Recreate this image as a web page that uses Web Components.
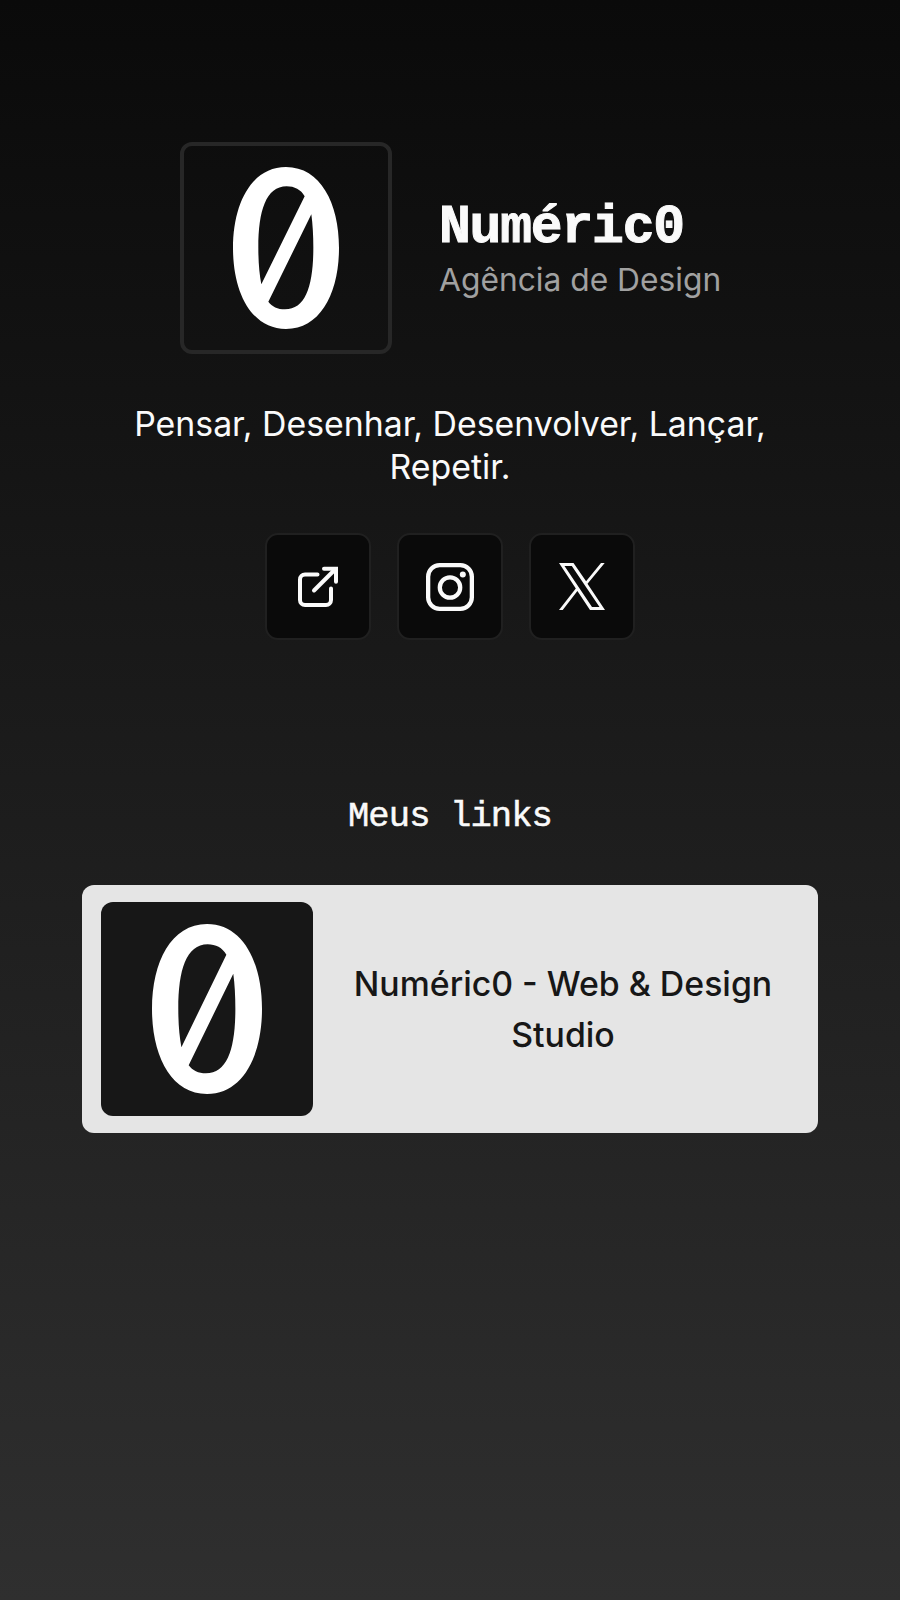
<!DOCTYPE html>
<html lang="pt">
<head>
<meta charset="utf-8">
<title>Numéric0</title>
<style>
    body {
        margin: 0;
        font-family: Inter, "Liberation Sans", sans-serif;
        color: #fafafa;
    }
</style>
</head>
<body>

<n0-page>
    <n0-profile>
        <n0-logo slot="logo"></n0-logo>
        <span slot="name">Numéric0</span>
        <span slot="role">Agência de Design</span>
    </n0-profile>
    <n0-bio>Pensar, Desenhar, Desenvolver, Lançar, Repetir.</n0-bio>
    <n0-socials>
        <n0-social icon="external"></n0-social>
        <n0-social icon="instagram"></n0-social>
        <n0-social icon="x"></n0-social>
    </n0-socials>
    <n0-heading>Meus links</n0-heading>
    <n0-link>
        <n0-logo slot="logo"></n0-logo>
        Numéric0 - Web &amp; Design Studio
    </n0-link>
</n0-page>

<script>
//icones des boutons
const ICONS = {
    external: `
        <svg width="40" height="41" viewBox="0 0 40 41" fill="none" stroke="#fafafa" stroke-width="4" stroke-linecap="round" stroke-linejoin="round">
            <path d="M19.500 8.500H7a5 5 0 0 0-5 5V34a5 5 0 0 0 5 5h21a5 5 0 0 0 5-5V22.500"/>
            <path d="M16 24.500L36 4.500"/>
            <path d="M26 2.700h12v13" stroke-linejoin="miter"/>
        </svg>`,
    instagram: `
        <svg width="48" height="48" viewBox="0 0 48 48" fill="none" stroke="#fafafa" stroke-width="4.300">
            <rect x="2.150" y="2.150" width="43.700" height="43.700" rx="11.500"/>
            <circle cx="24" cy="24.500" r="10.200"/>
            <circle cx="36.800" cy="11.500" r="3" fill="#fafafa" stroke="none"/>
        </svg>`,
    x: `
        <svg width="46" height="47" viewBox="0 0 46 47" fill="#fafafa">
            <path fill-rule="evenodd" d="M0 0h14.500l12.600 18.300L42 0h3.700L28.500 20.700 46 47H31L18.400 28 3.700 47H0L16.800 25.500zM5.500 3l27.500 41h7.500L12.800 3z"/>
        </svg>`
};

class N0Page extends HTMLElement {
    constructor() {
        super();
        this.attachShadow({ mode: 'open' }).innerHTML = `
        <style>
            :host {
                display: flex;
                flex-direction: column;
                align-items: center;
                box-sizing: border-box;
                height: 1600px;
                padding-top: 142px;
                background: linear-gradient(#0a0a0a, #2f2f2f);
            }
        </style>
        <slot></slot>`;
    }
}

//zero barre': anneau ovale et barre oblique
class N0Logo extends HTMLElement {
    constructor() {
        super();
        this.attachShadow({ mode: 'open' }).innerHTML = `
        <style>
            :host { display: block; }
            svg { display: block; width: 100%; height: 100%; }
        </style>
        <svg viewBox="0 0 318 486" preserveAspectRatio="none">
            <path fill="#fff" fill-rule="evenodd" d="M159 0C262 0 318 108 318 243S262 486 159 486 0 378 0 243 56 0 159 0Z
                M215 88C204 68 184 58 161 58C99 58 76 132 76 242C76 285 79 321 85 352Z
                M106 404C117 419 134 427 156 427C219 427 241 353 241 242C241 205 239 171 235 142Z"/>
        </svg>`;
    }
}

class N0Profile extends HTMLElement {
    constructor() {
        super();
        this.attachShadow({ mode: 'open' }).innerHTML = `
        <style>
            :host {
                display: flex;
                align-items: center;
                gap: 47px;
            }
            .avatar {
                display: flex;
                align-items: center;
                justify-content: center;
                box-sizing: border-box;
                width: 212px;
                height: 212px;
                border: 4px solid #272727;
                border-radius: 12px;
            }
            ::slotted(n0-logo) { width: 106px; height: 162px; }
            .text {
                display: flex;
                flex-direction: column;
                width: 281px;
                padding-top: 3px;
            }
            h1 {
                margin: 0;
                font: bold 53px/60px "Liberation Mono", monospace;
                letter-spacing: -1.200px;
                white-space: nowrap;
                -webkit-text-stroke: 1px #fafafa;
            }
            p {
                margin: 0;
                font-size: 31.750px;
                line-height: 44px;
                white-space: nowrap;
                color: #a1a1a1;
            }
        </style>
        <div class="avatar"><slot name="logo"></slot></div>
        <div class="text">
            <h1><slot name="name"></slot></h1>
            <p><slot name="role"></slot></p>
        </div>`;
    }
}

class N0Bio extends HTMLElement {
    constructor() {
        super();
        this.attachShadow({ mode: 'open' }).innerHTML = `
        <style>
            :host {
                display: block;
                width: 660px;
                margin-top: 49px;
                font-size: 33.850px;
                line-height: 42.500px;
                text-align: center;
            }
        </style>
        <slot></slot>`;
    }
}

class N0Socials extends HTMLElement {
    constructor() {
        super();
        this.attachShadow({ mode: 'open' }).innerHTML = `
        <style>
            :host {
                display: flex;
                gap: 26px;
                margin-top: 45px;
            }
        </style>
        <slot></slot>`;
    }
}

class N0Social extends HTMLElement {
    connectedCallback() {
        this.attachShadow({ mode: 'open' }).innerHTML = `
        <style>
            :host {
                display: flex;
                align-items: center;
                justify-content: center;
                box-sizing: border-box;
                width: 106px;
                height: 107px;
                border: 2px solid #202020;
                border-radius: 13px;
                background: #0a0a0a;
            }
            svg { display: block; }
        </style>
        ${ICONS[this.getAttribute('icon')]}`;
    }
}

class N0Heading extends HTMLElement {
    constructor() {
        super();
        this.attachShadow({ mode: 'open' }).innerHTML = `
        <style>
            :host { display: block; margin-top: 153px; }
            h2 {
                margin: 0;
                font: normal 35.500px/48px "Liberation Mono", monospace;
                letter-spacing: -0.900px;
                -webkit-text-stroke: 0.500px #fafafa;
            }
        </style>
        <h2><slot></slot></h2>`;
    }
}

class N0Link extends HTMLElement {
    constructor() {
        super();
        this.attachShadow({ mode: 'open' }).innerHTML = `
        <style>
            :host {
                display: flex;
                align-items: center;
                box-sizing: border-box;
                width: 736px;
                height: 248px;
                margin-top: 44px;
                padding: 0 19px;
                border-radius: 12px;
                background: #e5e5e5;
                color: #171717;
            }
            .thumb {
                display: flex;
                flex: none;
                align-items: center;
                justify-content: center;
                width: 212px;
                height: 214px;
                border-radius: 12px;
                background: #171717;
            }
            ::slotted(n0-logo) { width: 110px; height: 170px; }
            .label {
                flex: 1;
                padding: 0 6px 0 20px;
                font-size: 33.850px;
                font-weight: 500;
                line-height: 51px;
                text-align: center;
            }
        </style>
        <div class="thumb"><slot name="logo"></slot></div>
        <div class="label"><slot></slot></div>`;
    }
}

//registre des elements
customElements.define('n0-page', N0Page);
customElements.define('n0-logo', N0Logo);
customElements.define('n0-profile', N0Profile);
customElements.define('n0-bio', N0Bio);
customElements.define('n0-socials', N0Socials);
customElements.define('n0-social', N0Social);
customElements.define('n0-heading', N0Heading);
customElements.define('n0-link', N0Link);
</script>
</body>
</html>
